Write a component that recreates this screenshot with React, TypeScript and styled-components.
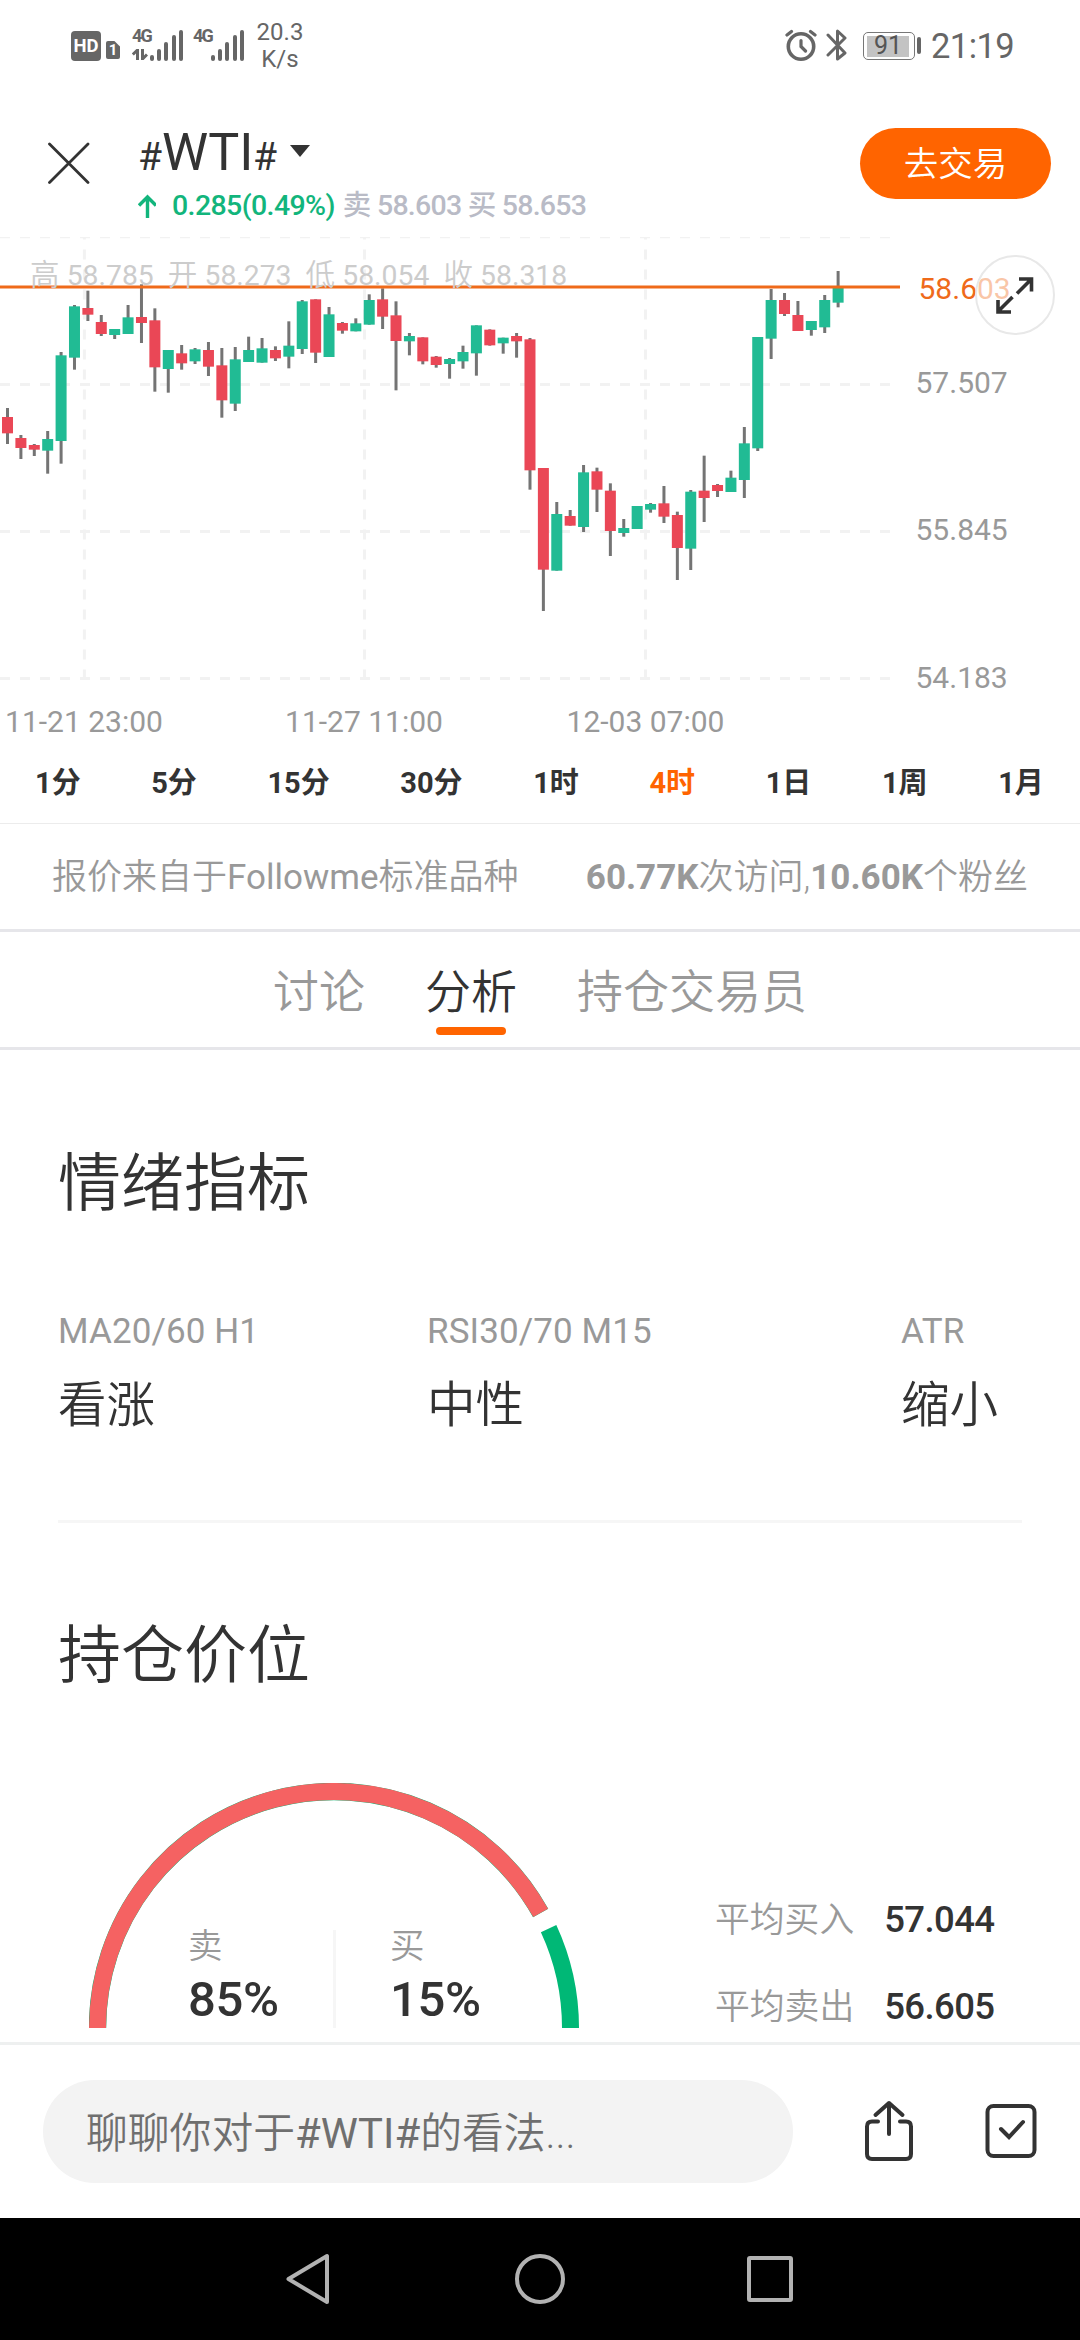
import React from 'react';
import styled, { createGlobalStyle } from 'styled-components';

const GlobalStyle = createGlobalStyle`
  html, body { margin: 0; padding: 0; background: #fff; }
  * { box-sizing: border-box; }
  body { font-family: Roboto, "Noto Sans CJK SC", sans-serif; color: #333; }
  svg { display: block; flex: none; }
`;

const Page = styled.main`
  width: 1080px;
  height: 2340px;
  display: flex;
  flex-direction: column;
  overflow: hidden;
  background: #fff;
  white-space: nowrap;
`;

/* ---------- status bar ---------- */

const StatusBar = styled.div`
  height: 90px;
  flex: none;
  display: flex;
  align-items: flex-start;
  justify-content: space-between;
  padding: 23px 66px 0 71px;
  color: #666;
`;
const StatusGroup = styled.div`
  display: flex;
  align-items: flex-start;
`;
const HdBadge = styled.span`
  width: 30px;
  height: 30px;
  margin-top: 8px;
  border-radius: 4px;
  background: #666;
  color: #fff;
  font-size: 18.5px;
  font-weight: 700;
  line-height: 31px;
  text-align: center;
`;
const SimBadge = styled.span`
  width: 14px;
  height: 18px;
  margin: 18px 0 0 5px;
  border-radius: 2px;
  background: #666;
  clip-path: polygon(0 0, 60% 0, 100% 30%, 100% 100%, 0 100%);
  color: #fff;
  font-size: 15px;
  font-weight: 700;
  line-height: 19px;
  text-align: center;
`;
const Signal = styled.div<{ $gap: number; $width: number }>`
  width: ${p => p.$width}px;
  height: 38px;
  margin-left: ${p => p.$gap}px;
  display: flex;
  align-items: flex-end;
  justify-content: space-between;
`;
const SignalKind = styled.div`
  align-self: stretch;
  padding-top: 5px;
  display: flex;
  flex-direction: column;
  gap: 5px;
  width: 18px;
  font-size: 18px;
  font-weight: 700;
  line-height: 16px;
  letter-spacing: -1.8px;
`;
const Bars = styled.div`
  display: flex;
  align-items: flex-end;
  gap: 3.2px;
`;
const Bar = styled.i<{ $h: number }>`
  width: 4px;
  height: ${p => p.$h}px;
  border-radius: 2px;
  background: #666;
`;
const Speed = styled.div`
  margin-left: 13px;
  width: 48px;
  margin-top: -4px;
  text-align: center;
  font-size: 24px;
  line-height: 27px;
`;
const Battery = styled.div`
  width: 52px;
  height: 28px;
  margin: 9px 0 0 15px;
  border: 1.5px solid #777;
  border-radius: 5px;
  padding: 2.5px 3px;
  display: flex;
`;
const BatteryFill = styled.div`
  width: 42px;
  background: #c3c3c3;
  font-size: 25px;
  line-height: 20px;
  text-align: center;
  color: #555;
`;
const BatteryTip = styled.i`
  width: 4px;
  height: 17px;
  margin: 14px 0 0 2px;
  border-radius: 2px;
  background: #666;
`;
const Clock = styled.span`
  margin: 3px 0 0 10px;
  font-size: 34.5px;
  line-height: 40px;
  letter-spacing: -0.6px;
`;

/* ---------- header ---------- */

const Header = styled.header`
  height: 147px;
  flex: none;
  display: flex;
  align-items: flex-start;
  padding: 0 29px 0 48px;
`;
const CloseIcon = styled.svg`
  margin-top: 52px;
`;
const Instrument = styled.div`
  flex: 1;
  margin-left: 48px;
`;
const Title = styled.h1`
  margin: 32px 0 0;
  height: 62px;
  display: flex;
  align-items: baseline;
  font-weight: 400;
  font-size: 52px;
  line-height: 62px;
  letter-spacing: -0.2px;
`;
const Hash = styled.span`
  font-size: 39px;
  letter-spacing: 0;
`;
const Caret = styled.i`
  width: 0;
  height: 0;
  margin-left: 13px;
  align-self: flex-start;
  margin-top: 23px;
  border: 10.5px solid transparent;
  border-top: 12px solid #333;
  border-bottom: 0;
`;
const Quote = styled.div`
  display: flex;
  align-items: center;
  height: 40px;
  margin-top: 2px;
  font-size: 28.5px;
  font-weight: 500;
  line-height: 40px;
  letter-spacing: -0.75px;
  color: #b9bbc6;
`;
const Change = styled.span`
  margin: 0 8px 0 16px;
  color: #12b57c;
  letter-spacing: -0.6px;
`;
const TradeButton = styled.button`
  width: 191px;
  height: 71px;
  margin-top: 38px;
  padding: 2px 0 0;
  border: 0;
  border-radius: 36px;
  background: #ff6400;
  color: #fff;
  font: 350 34.5px/69px Roboto, "Noto Sans CJK SC", sans-serif;
`;

/* ---------- chart ---------- */

const Chart = styled.section`
  position: relative;
  height: 511px;
  flex: none;
`;
const PlotRow = styled.div`
  display: flex;
  height: 464px;
`;
const Axis = styled.div`
  width: 180px;
  padding: 32px 0 0 15.5px;
  display: flex;
  flex-direction: column;
  font-size: 30px;
  line-height: 40px;
  color: #999;
`;
const AxisPrice = styled.span<{ $gap?: number; $current?: boolean }>`
  margin-top: ${p => p.$gap ?? 0}px;
  margin-left: ${p => (p.$current ? 3 : 0)}px;
  color: ${p => (p.$current ? '#ef6a1a' : 'inherit')};
`;
const Legend = styled.div`
  position: absolute;
  left: 30px;
  top: 18px;
  display: flex;
  font-size: 29.5px;
  font-weight: 350;
  line-height: 40px;
  color: #ccc;
`;
const LegendItem = styled.span`
  width: 137.8px;
  b { font-size: 28.3px; font-weight: 400; }
`;
const Expand = styled.button`
  position: absolute;
  left: 975px;
  top: 18px;
  width: 80px;
  height: 80px;
  padding: 0;
  border: 2.5px solid #e8e8e8;
  border-radius: 50%;
  background: rgba(255, 255, 255, 0.62);
  display: grid;
  place-items: center;
`;
const Dates = styled.div`
  display: flex;
  font-size: 30px;
  line-height: 41px;
  color: #999;
`;
const DateLabel = styled.span<{ $w: number }>`
  width: ${p => p.$w}px;
  text-align: center;
`;

const Intervals = styled.nav`
  height: 76px;
  flex: none;
  display: flex;
  gap: 70.6px;
  padding-left: 35px;
  border-bottom: 1px solid #ececec;
  font-size: 29px;
  font-weight: 700;
  line-height: 70px;
`;
const Interval = styled.span<{ $active?: boolean }>`
  color: ${p => (p.$active ? '#ff6400' : '#333')};
`;

const Source = styled.div`
  height: 108px;
  flex: none;
  display: flex;
  justify-content: space-between;
  padding: 0 52px 0 52px;
  border-bottom: 3px solid #e6e6ea;
  font-size: 35px;
  font-weight: 350;
  line-height: 108px;
  color: #999;
  b { font-weight: 700; }
  em { font-style: normal; font-weight: 400; }
`;

const Tabs = styled.nav`
  height: 118px;
  flex: none;
  display: flex;
  justify-content: center;
  gap: 60px;
  padding-top: 25px;
  border-bottom: 3px solid #e6e6ea;
`;
const Tab = styled.div<{ $active?: boolean }>`
  display: flex;
  flex-direction: column;
  align-items: center;
  font-size: 46px;
  font-weight: 350;
  line-height: 70px;
  color: ${p => (p.$active ? '#333' : '#999')};
  &::after {
    content: '';
    width: 70px;
    height: 8px;
    border-radius: 4px;
    background: ${p => (p.$active ? '#ff6400' : 'transparent')};
  }
`;

/* ---------- analysis ---------- */

const Analysis = styled.section`
  height: 992px;
  flex: none;
  padding: 94px 58px 0;
`;
const Heading = styled.h2`
  margin: 0;
  font-size: 63px;
  font-weight: 350;
  line-height: 80px;
`;
const Indicators = styled.div`
  height: 299px;
  display: grid;
  grid-template-columns: 369px 474px 1fr;
  padding-top: 84px;
  border-bottom: 3px solid #f6f6f6;
`;
const IndicatorName = styled.div`
  font-size: 35px;
  line-height: 47px;
  letter-spacing: 0.1px;
  color: #999;
`;
const IndicatorValue = styled.div`
  margin-top: 20px;
  font-size: 48.5px;
  font-weight: 350;
  line-height: 61px;
`;
const PositionHeading = styled(Heading)`
  margin-top: 93px;
`;
const Position = styled.div`
  display: flex;
  margin: 87px 0 0 31px;
  height: 245px;
`;
const Gauge = styled.div`
  width: 490px;
  display: grid;
  > * { grid-area: 1 / 1; }
`;
const Shares = styled.div`
  align-self: end;
  height: 98px;
  display: flex;
  padding-left: 99px;
`;
const Share = styled.div<{ $divider?: boolean }>`
  width: ${p => (p.$divider ? 148 : 200)}px;
  margin-right: ${p => (p.$divider ? 54 : 0)}px;
  border-right: ${p => (p.$divider ? '3px solid #f6f6f6' : '0')};
`;
const ShareName = styled.div`
  font-size: 34.5px;
  font-weight: 350;
  line-height: 32px;
  color: #999;
`;
const ShareValue = styled.div`
  margin-top: 8px;
  font-size: 49px;
  font-weight: 500;
  line-height: 60px;
  letter-spacing: -0.3px;
`;
const Averages = styled.div`
  margin-left: 136px;
  padding-top: 117px;
  display: flex;
  flex-direction: column;
  gap: 46.5px;
`;
const Average = styled.div`
  display: flex;
  font-size: 34.8px;
  font-weight: 350;
  line-height: 40px;
  color: #999;
`;
const AverageValue = styled.b`
  margin-left: 30px;
  font-size: 36.5px;
  font-weight: 500;
  letter-spacing: -0.6px;
  color: #333;
`;

/* ---------- bottom ---------- */

const ReplyBar = styled.footer`
  height: 176px;
  flex: none;
  display: flex;
  align-items: flex-start;
  padding: 35px 43px 0 43px;
  border-top: 3px solid #eef0f0;
`;
const ReplyField = styled.div`
  width: 751px;
  height: 103px;
  padding-left: 43px;
  border-radius: 52px;
  background: #f3f3f3;
  font-size: 41.8px;
  font-weight: 350;
  line-height: 108px;
  color: #6f6f6f;
  em { font-style: normal; font-weight: 400; }
`;
const ShareIcon = styled.svg`
  margin: 20px 0 0 71px;
`;
const CheckIcon = styled.svg`
  margin: 24px 0 0 71px;
`;
const SystemNav = styled.div`
  height: 122px;
  flex: none;
  display: flex;
  justify-content: center;
  align-items: center;
  gap: 179px;
  background: #000;
`;

/* Wick top, body top, body bottom, wick bottom in thirds of a pixel; last value: 1 = up, 0 = down */
const candles: number[][] = [
  [564, 591, 640, 672, 0], [645, 654, 684, 717, 0], [672, 675, 689, 708, 0], [633, 657, 692, 761, 1],
  [396, 406, 663, 731, 1], [255, 259, 413, 449, 1], [212, 264, 284, 303, 0], [285, 306, 342, 348, 0],
  [327, 327, 345, 357, 1], [255, 292, 342, 342, 1], [193, 291, 309, 369, 0], [265, 301, 442, 515, 0],
  [390, 390, 447, 518, 1], [375, 400, 430, 449, 0], [384, 388, 424, 432, 1], [366, 390, 440, 468, 0],
  [384, 436, 541, 593, 0], [381, 418, 551, 573, 1], [350, 390, 426, 426, 1], [354, 385, 428, 428, 1],
  [379, 390, 415, 423, 0], [304, 377, 410, 445, 1], [240, 244, 387, 402, 1], [238, 238, 398, 429, 0],
  [261, 283, 411, 411, 1], [306, 309, 332, 341, 0], [295, 310, 334, 334, 1], [223, 240, 314, 314, 1],
  [205, 238, 290, 327, 0], [244, 286, 363, 511, 0], [339, 348, 364, 406, 1], [352, 352, 424, 433, 0],
  [408, 410, 435, 443, 0], [414, 417, 432, 476, 1], [377, 396, 424, 446, 1], [316, 316, 400, 467, 1],
  [328, 329, 376, 377, 0], [353, 353, 370, 401, 1], [339, 348, 364, 413, 0], [354, 358, 751, 809, 0],
  [744, 744, 1049, 1173, 0], [846, 882, 1052, 1052, 1], [870, 888, 917, 917, 0], [735, 757, 921, 936, 1],
  [743, 754, 809, 876, 0], [790, 812, 933, 1008, 0], [897, 924, 939, 950, 1], [858, 858, 927, 927, 1],
  [849, 852, 869, 878, 1], [798, 850, 890, 909, 0], [875, 885, 984, 1080, 0], [810, 815, 986, 1050, 1],
  [707, 812, 834, 906, 0], [792, 795, 813, 831, 0], [752, 773, 816, 816, 1], [621, 670, 780, 834, 1],
  [351, 351, 685, 693, 1], [207, 240, 356, 417, 1], [219, 240, 282, 288, 0], [243, 285, 333, 333, 0],
  [303, 303, 330, 347, 1], [225, 240, 322, 339, 1], [153, 198, 248, 262, 1],
];
const STEP = 13.397;
const toY = (v: number) => v / 3 - 17;

function CandlePlot() {
  return (
    <svg width="900" height="443" viewBox="0 0 900 443">
      <g stroke="#f2f2f2" strokeWidth="3" strokeDasharray="10 10" fill="none">
        <path d="M0 .5H890" strokeWidth="1.5" />
        <path d="M0 147.5H890M0 294.5H890M0 441.5H890" />
        <path d="M84.4 442.5V0M364.5 442.5V0M645.5 442.5V0" />
      </g>
      {candles.map(([wt, bt, bb, wb, up], i) => {
        const x = 7.5 + i * STEP;
        return (
          <g key={i}>
            <rect x={x - 1.5} y={toY(wt)} width="3" height={(wb - wt) / 3} fill="#747474" />
            <rect x={x - 5.5} y={toY(bt)} width="11" height={(bb - bt) / 3} fill={up ? '#21bb94' : '#ea4756'} />
          </g>
        );
      })}
      <rect y="48.5" width="900" height="3" fill="#ef6a1a" />
    </svg>
  );
}

const point = (deg: number) => {
  const a = (deg * Math.PI) / 180;
  return `${245 + 236.5 * Math.cos(a)} ${245 - 236.5 * Math.sin(a)}`;
};

function GaugeArc() {
  return (
    <svg width="490" height="245" viewBox="0 0 490 245" fill="none" strokeWidth="17">
      <path d={`M8.5 245A236.5 236.5 0 0 1 ${point(29.1)}`} stroke="#00b876" strokeWidth="17.4" />
      <path d={`M8.5 245A236.5 236.5 0 0 1 ${point(29.1)}`} stroke="#f56262" />
      <path d={`M${point(24.85)}A236.5 236.5 0 0 1 481.5 245`} stroke="#00b876" />
    </svg>
  );
}

const BAR_HEIGHTS = [6, 12.5, 19.5, 26, 31];

function SignalBars() {
  return <Bars>{BAR_HEIGHTS.map(h => <Bar key={h} $h={h} />)}</Bars>;
}

const BluetoothIcon = styled.svg`
  margin-left: 9px;
`;

const intervals = ['1分', '5分', '15分', '30分', '1时', '4时', '1日', '1周', '1月'];
const legend = [['高', '58.785'], ['开', '58.273'], ['低', '58.054'], ['收', '58.318']];
const indicators = [['MA20/60 H1', '看涨'], ['RSI30/70 M15', '中性'], ['ATR', '缩小']];

export default function App() {
  return (
    <>
      <GlobalStyle />
      <Page>
        <StatusBar>
          <StatusGroup>
            <HdBadge>HD</HdBadge>
            <SimBadge>1</SimBadge>
            <Signal $gap={12} $width={50}>
              <SignalKind>
                4G
                <svg width="16" height="11" viewBox="0 0 16 11" fill="none" stroke="#666" strokeWidth="3">
                  <path d="M5.5 11V1L.8 5.5M10.5 0V10L15 5.5" />
                </svg>
              </SignalKind>
              <SignalBars />
            </Signal>
            <Signal $gap={11} $width={50}>
              <SignalKind>4G</SignalKind>
              <SignalBars />
            </Signal>
            <Speed>20.3<br />K/s</Speed>
          </StatusGroup>
          <StatusGroup>
            <svg width="32" height="38" viewBox="0 0 32 38" fill="none" stroke="#666" strokeWidth="3.6" strokeLinecap="round">
              <circle cx="16" cy="23.5" r="12.7" />
              <path d="M16 17.5V23.5L20.5 28M2 12L6.5 8.5M30 12L25.5 8.5" strokeWidth="3.2" />
            </svg>
            <BluetoothIcon width="22" height="38" viewBox="0 0 22 38" fill="none" stroke="#666" strokeWidth="3">
              <path d="M2 12L19 30L11.5 36V8L19 15L2 32" strokeLinecap="round" strokeLinejoin="round" />
            </BluetoothIcon>
            <Battery><BatteryFill>91</BatteryFill></Battery>
            <BatteryTip />
            <Clock>21:19</Clock>
          </StatusGroup>
        </StatusBar>

        <Header>
          <CloseIcon width="42" height="42" viewBox="0 0 42 42" stroke="#333" strokeWidth="2.8" strokeLinecap="round">
            <path d="M1.5 2L40 40.5M40 2L1.5 40.5" />
          </CloseIcon>
          <Instrument>
            <Title><Hash>#</Hash>WTI<Hash>#</Hash><Caret /></Title>
            <Quote>
              <svg width="18" height="24" viewBox="0 0 18 24" fill="none" stroke="#12b57c" strokeWidth="3.4">
                <path d="M9.5 24V3M1 11.5L9.5 3L18 11.5" />
              </svg>
              <Change>0.285(0.49%)</Change>
              卖 58.603 买 58.653
            </Quote>
          </Instrument>
          <TradeButton>去交易</TradeButton>
        </Header>

        <Chart>
          <PlotRow>
            <CandlePlot />
            <Axis>
              <AxisPrice $current>58.603</AxisPrice>
              <AxisPrice $gap={54}>57.507</AxisPrice>
              <AxisPrice $gap={107}>55.845</AxisPrice>
              <AxisPrice $gap={108}>54.183</AxisPrice>
            </Axis>
          </PlotRow>
          <Dates>
            <DateLabel $w={168}>11-21 23:00</DateLabel>
            <DateLabel $w={392}>11-27 11:00</DateLabel>
            <DateLabel $w={171}>12-03 07:00</DateLabel>
          </Dates>
          <Legend>
            {legend.map(([k, v]) => <LegendItem key={k}>{k} <b>{v}</b></LegendItem>)}
          </Legend>
          <Expand>
            <svg width="40" height="40" viewBox="0 0 40 40" fill="none" stroke="#333" strokeWidth="3.6">
              <path d="M22 18.5L36.5 4M24 4H36.5V16.5M17.5 22L3 36.5M3 25V37H16" />
            </svg>
          </Expand>
        </Chart>

        <Intervals>
          {intervals.map(t => <Interval key={t} $active={t === '4时'}>{t}</Interval>)}
        </Intervals>

        <Source>
          <span>报价来自于<em>Followme</em>标准品种</span>
          <span><b>60.77K</b>次访问,<b>10.60K</b>个粉丝</span>
        </Source>

        <Tabs>
          <Tab>讨论</Tab>
          <Tab $active>分析</Tab>
          <Tab>持仓交易员</Tab>
        </Tabs>

        <Analysis>
          <Heading>情绪指标</Heading>
          <Indicators>
            {indicators.map(([name, value]) => (
              <div key={name}>
                <IndicatorName>{name}</IndicatorName>
                <IndicatorValue>{value}</IndicatorValue>
              </div>
            ))}
          </Indicators>
          <PositionHeading>持仓价位</PositionHeading>
          <Position>
            <Gauge>
              <GaugeArc />
              <Shares>
                <Share $divider>
                  <ShareName>卖</ShareName>
                  <ShareValue>85%</ShareValue>
                </Share>
                <Share>
                  <ShareName>买</ShareName>
                  <ShareValue>15%</ShareValue>
                </Share>
              </Shares>
            </Gauge>
            <Averages>
              <Average>平均买入<AverageValue>57.044</AverageValue></Average>
              <Average>平均卖出<AverageValue>56.605</AverageValue></Average>
            </Averages>
          </Position>
        </Analysis>

        <ReplyBar>
          <ReplyField>聊聊你对于<em>#WTI#</em>的看法...</ReplyField>
          <ShareIcon width="50" height="62" viewBox="0 0 50 62" fill="none" stroke="#333" strokeWidth="4" strokeLinecap="round" strokeLinejoin="round">
            <path d="M14 21.5H8Q3 21.5 3 26.5V54Q3 59 8 59H42Q47 59 47 54V26.5Q47 21.5 42 21.5H36" />
            <path d="M25 34V3M11.5 15L25 3L38.5 15" />
          </ShareIcon>
          <CheckIcon width="52" height="54" viewBox="0 0 52 54" fill="none" stroke="#333" strokeWidth="4" strokeLinecap="round">
            <rect x="2.5" y="2" width="47" height="50" rx="6" />
            <path d="M16 25L24 33L38 18" />
          </CheckIcon>
        </ReplyBar>

        <SystemNav>
          <svg width="50" height="52" viewBox="0 0 50 52" fill="none" stroke="#b2b2b2" strokeWidth="4" strokeLinejoin="round">
            <path d="M42 3V49L3.5 26Z" />
          </svg>
          <svg width="52" height="52" viewBox="0 0 52 52" fill="none" stroke="#b2b2b2" strokeWidth="4">
            <circle cx="26" cy="26" r="23" />
          </svg>
          <svg width="50" height="52" viewBox="0 0 50 52" fill="none" stroke="#b2b2b2" strokeWidth="4" strokeLinejoin="round">
            <rect x="4" y="5" width="42" height="42" rx="1" />
          </svg>
        </SystemNav>
      </Page>
    </>
  );
}
